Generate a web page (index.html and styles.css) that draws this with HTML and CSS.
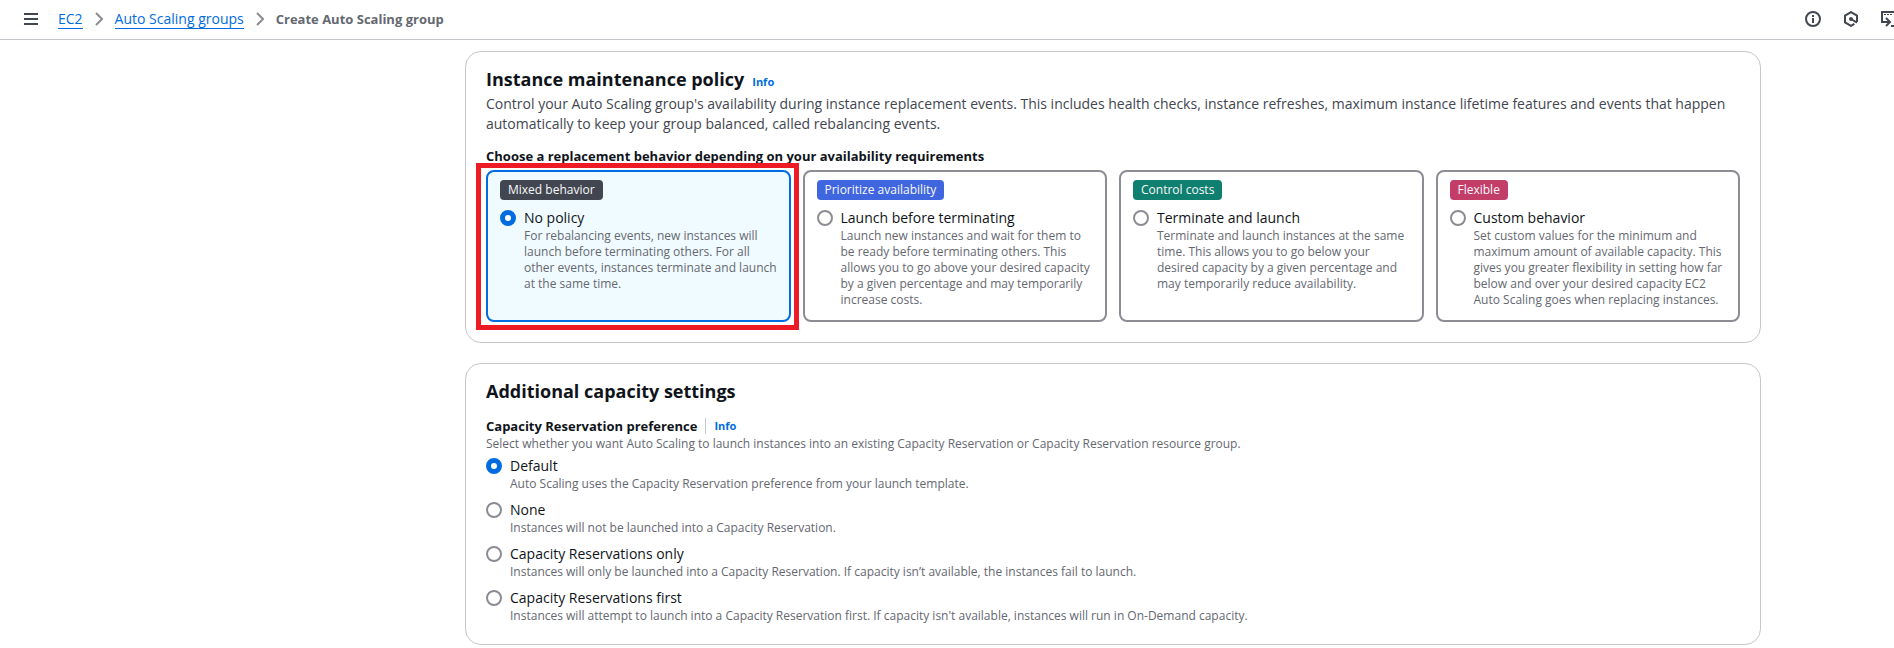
FILE: index.html
```html
<!DOCTYPE html>
<html lang="en">
<head>
<meta charset="utf-8">
<title>Create Auto Scaling group</title>
<link rel="stylesheet" href="styles.css">
</head>
<body>
<header class="topbar">
  <button class="icon-button" aria-label="Menu"><svg class="menu-icon" width="14" height="12" viewBox="0 0 14 12"><path d="M0 1h14M0 6h14M0 11h14"/></svg></button>
  <nav class="crumbs" aria-label="Breadcrumbs">
    <a href="#">EC2</a>
    <svg class="chevron" width="8" height="14" viewBox="0 0 8 14"><path d="M1 1l6 6-6 6"/></svg>
    <a href="#">Auto Scaling groups</a>
    <svg class="chevron" width="8" height="14" viewBox="0 0 8 14"><path d="M1 1l6 6-6 6"/></svg>
    <span class="current">Create Auto Scaling group</span>
  </nav>
  <div class="tools">
    <button class="icon-button" aria-label="Info"><svg width="16" height="16" viewBox="0 0 16 16"><circle cx="8" cy="8" r="7"/><path d="M8 7v5M8 4v2"/></svg></button>
    <button class="icon-button" aria-label="Amazon Q"><svg width="16" height="16" viewBox="0 0 16 16"><path d="M14 11V4.6L8 1.1 2 4.6v6.8l6 3.5 3.4-2M8 8l6 3.6"/><circle class="dot" cx="8" cy="8" r="2"/></svg></button>
    <button class="icon-button" aria-label="CloudShell"><svg width="13" height="16" viewBox="0 0 13 16"><path d="M13 1H1v10h7M5 7l4 4-4 4M10 15h3"/><path class="thin" d="M3 3.5h2M6 3.5h2M9 3.5h2"/></svg></button>
  </div>
</header>

<main class="content">
  <section class="card">
    <header class="card-head">
      <h2>Instance maintenance policy</h2>
      <a class="info" href="#">Info</a>
    </header>
    <p class="intro">Control your Auto Scaling group's availability during instance replacement events. This includes health checks, instance refreshes, maximum instance lifetime features and events that happen automatically to keep your group balanced, called rebalancing events.</p>
    <fieldset class="field">
      <legend>Choose a replacement behavior depending on your availability requirements</legend>
      <div class="tiles">
        <label class="tile selected">
          <span class="badge grey">Mixed behavior</span>
          <span class="option"><input type="radio" name="behavior" checked><span class="text"><span class="name">No policy</span><span class="hint">For rebalancing events, new instances will launch before terminating others. For all other events, instances terminate and launch at the same time.</span></span></span>
          <span class="highlight"></span>
        </label>
        <label class="tile">
          <span class="badge blue">Prioritize availability</span>
          <span class="option"><input type="radio" name="behavior"><span class="text"><span class="name">Launch before terminating</span><span class="hint">Launch new instances and wait for them to be ready before terminating others. This allows you to go above your desired capacity by a given percentage and may temporarily increase costs.</span></span></span>
        </label>
        <label class="tile">
          <span class="badge green">Control costs</span>
          <span class="option"><input type="radio" name="behavior"><span class="text"><span class="name">Terminate and launch</span><span class="hint">Terminate and launch instances at the same time. This allows you to go below your desired capacity by a given percentage and may temporarily reduce availability.</span></span></span>
        </label>
        <label class="tile">
          <span class="badge red">Flexible</span>
          <span class="option"><input type="radio" name="behavior"><span class="text"><span class="name">Custom behavior</span><span class="hint">Set custom values for the minimum and maximum amount of available capacity. This gives you greater flexibility in setting how far below and over your desired capacity EC2 Auto Scaling goes when replacing instances.</span></span></span>
        </label>
      </div>
    </fieldset>
  </section>

  <section class="card">
    <header class="card-head">
      <h2>Additional capacity settings</h2>
    </header>
    <div class="field" role="radiogroup" aria-labelledby="pref">
      <div class="field-head"><span class="field-label" id="pref">Capacity Reservation preference</span><span class="divider"></span><a class="info" href="#">Info</a></div>
      <p class="hint">Select whether you want Auto Scaling to launch instances into an existing Capacity Reservation or Capacity Reservation resource group.</p>
      <div class="options">
        <label class="option"><input type="radio" name="pref" checked><span class="text"><span class="name">Default</span><span class="hint">Auto Scaling uses the Capacity Reservation preference from your launch template.</span></span></label>
        <label class="option"><input type="radio" name="pref"><span class="text"><span class="name">None</span><span class="hint">Instances will not be launched into a Capacity Reservation.</span></span></label>
        <label class="option"><input type="radio" name="pref"><span class="text"><span class="name">Capacity Reservations only</span><span class="hint">Instances will only be launched into a Capacity Reservation. If capacity isn’t available, the instances fail to launch.</span></span></label>
        <label class="option"><input type="radio" name="pref"><span class="text"><span class="name">Capacity Reservations first</span><span class="hint">Instances will attempt to launch into a Capacity Reservation first. If capacity isn't available, instances will run in On-Demand capacity.</span></span></label>
      </div>
    </div>
  </section>
</main>
</body>
</html>
```
FILE: styles.css
```css
* { box-sizing: border-box; }
body {
  margin: 0;
  background: #fff;
  color: #0f141a;
  font: 14px/20px "Open Sans", "Noto Sans", sans-serif;
}
h2, p { margin: 0; }
a { color: #006ce0; text-decoration: none; }

.topbar {
  display: flex;
  align-items: center;
  height: 40px;
  padding: 0 0 1px 24px;
  border-bottom: 1px solid #c6c6cd;
}
.icon-button {
  display: flex;
  padding: 0;
  border: 0;
  background: none;
}
.icon-button svg { fill: none; stroke: #424650; stroke-width: 2; }
.icon-button .dot { fill: #424650; stroke: none; }
.icon-button .thin { stroke-width: 1; }
.crumbs { display: flex; align-items: center; gap: 12px; margin-left: 20px; }
.crumbs a { line-height: 18px; border-bottom: 1px solid #006ce0; }
.chevron { fill: none; stroke: #8c8c94; stroke-width: 2; }
.current { color: #656871; font-size: 13px; font-weight: 700; }
.tools { display: flex; gap: 22px; margin-left: auto; }

.content {
  display: grid;
  gap: 20px;
  padding: 11px 133px 0 465px;
}
.card {
  padding: 15px 20px 20px;
  border: 1px solid #c6c6cd;
  border-radius: 16px;
}
.card-head { display: flex; align-items: baseline; gap: 8px; padding-bottom: 1px; }
h2 { font-size: 18px; line-height: 24px; font-weight: 700; }
.info { font-size: 11px; line-height: 16px; font-weight: 700; }
.intro { margin-top: 2px; color: #424650; }
.field { margin: 12px 0 0; padding: 0; border: 0; min-width: 0; }
legend { padding: 0; font-size: 13px; font-weight: 700; }

.tiles {
  display: grid;
  grid-template-columns: repeat(4, minmax(0, 1fr));
  gap: 12px;
  margin-top: 4px;
}
.tile {
  position: relative;
  display: flex;
  flex-direction: column;
  align-items: flex-start;
  gap: 8px;
  padding: 8px 10px 12px 12px;
  border: 2px solid #8c8c94;
  border-radius: 8px;
}
.tile.selected { border-color: #006ce0; background: #f0fbff; }
.highlight {
  position: absolute;
  inset: -9px -10px -10px -12px;
  border: 5px solid #ed1c24;
  pointer-events: none;
}
.badge {
  padding: 2px 8px;
  border-radius: 4px;
  color: #f9f9fa;
  font-size: 12px;
  line-height: 16px;
}
.grey { background: #424650; }
.blue { background: #4066df; }
.green { background: #0f7f70; }
.red { background: #c33d69; }

.option { display: flex; align-items: flex-start; gap: 8px; }
.option input {
  appearance: none;
  flex: none;
  width: 16px;
  height: 16px;
  margin: 2px 0 0;
  border: 2px solid #8c8c94;
  border-radius: 50%;
  background: #fff;
}
.option input:checked { border: 5px solid #006ce0; }
.text { display: grid; }
.hint { color: #656871; font-size: 12px; line-height: 16px; }

.field-head { display: flex; align-items: center; gap: 8px; }
.field-label { font-size: 13px; font-weight: 700; }
.divider { width: 1px; height: 16px; background: #c6c6cd; }
.options { display: grid; gap: 8px; margin-top: 4px; }
```
